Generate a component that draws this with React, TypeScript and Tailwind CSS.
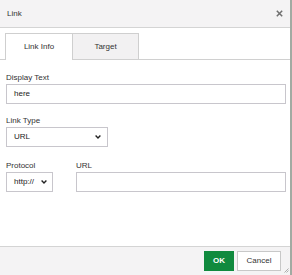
const Chevron = () => (
  <svg width="6" height="4" viewBox="0 0 6 4" className="shrink-0">
    <path d="M0.6 0.6 L3 3 L5.4 0.6" fill="none" stroke="#222" strokeWidth="1.4" />
  </svg>
);

const Label = ({ text }: { text: string }) => (
  <p className="h-[13px] leading-[13px] text-[8px] text-[#333]">{text}</p>
);

const App = () => {
  return (
    <div
      className="w-[292px] h-[275px] bg-white border-r-2 border-[#a2aaa2] flex flex-col text-[8px] text-[#333]"
      style={{ fontFamily: '"Liberation Sans", Arial, sans-serif' }}
    >
      <div className="h-[28px] shrink-0 flex items-center justify-between pl-[7px] pr-[7px] bg-[#f4f3f4] border-b border-[#d4d4d4]">
        <span className="text-[8px] text-[#333]">Link</span>
        <svg width="7" height="7" viewBox="0 0 7 7">
          <path d="M0.8 0.8 L6.2 6.2 M6.2 0.8 L0.8 6.2" stroke="#6f6f6f" strokeWidth="1.5" />
        </svg>
      </div>

      <div className="flex-1 flex flex-col">
        <div className="mt-[5px] flex pl-[5px] border-b border-[#d0d0d0] h-[27px]">
          <div className="w-[68px] h-[27px] -mb-px flex items-center justify-center bg-white border border-b-0 border-[#cfcfcf]">
            Link Info
          </div>
          <div className="w-[66px] h-[26px] flex items-center justify-center bg-[#f2f1f2] border border-l-0 border-b-0 border-[#cfcfcf]">
            Target
          </div>
        </div>

        <div className="px-[6px] flex flex-col">
          <div className="mt-[11px]">
            <Label text="Display Text" />
            <div className="h-[20px] w-[280px] border border-[#c8c6cc] flex items-center pl-[7px] text-[#222]">
              here
            </div>
          </div>

          <div className="mt-[10px]">
            <Label text="Link Type" />
            <div className="h-[20px] w-[102px] border border-[#c8c6cc] flex items-center justify-between pl-[7px] pr-[6px] text-[#222]">
              <span>URL</span>
              <Chevron />
            </div>
          </div>

          <div className="mt-[12px] flex gap-[23px]">
            <div className="w-[47px]">
              <Label text="Protocol" />
              <div className="h-[20px] w-[47px] border border-[#c8c6cc] flex items-center justify-between pl-[7px] pr-[5px] text-[#222]">
                <span>http://</span>
                <Chevron />
              </div>
            </div>
            <div className="flex-1">
              <Label text="URL" />
              <div className="h-[20px] w-[210px] border border-[#c8c6cc]" />
            </div>
          </div>
        </div>
      </div>

      <div className="h-[29px] shrink-0 bg-[#f4f3f4] border-t border-[#d4d4d4] flex items-start justify-end pt-[4px] pr-[9px] relative">
        <div className="flex gap-[3px]">
          <button className="h-[20px] w-[30px] bg-[#108a3e] text-white font-bold text-[8px] flex items-center justify-center">
            OK
          </button>
          <button className="h-[20px] w-[44px] bg-white border border-[#c8c8c8] text-[#333] text-[8px] flex items-center justify-center">
            Cancel
          </button>
        </div>
        <svg width="5" height="5" viewBox="0 0 5 5" className="absolute right-[1px] bottom-[2px]">
          <path d="M4.5 0.5 L0.5 4.5 M4.5 2.5 L2.5 4.5" stroke="#9a9a9a" strokeWidth="0.8" />
        </svg>
      </div>
    </div>
  );
};

export default App;
